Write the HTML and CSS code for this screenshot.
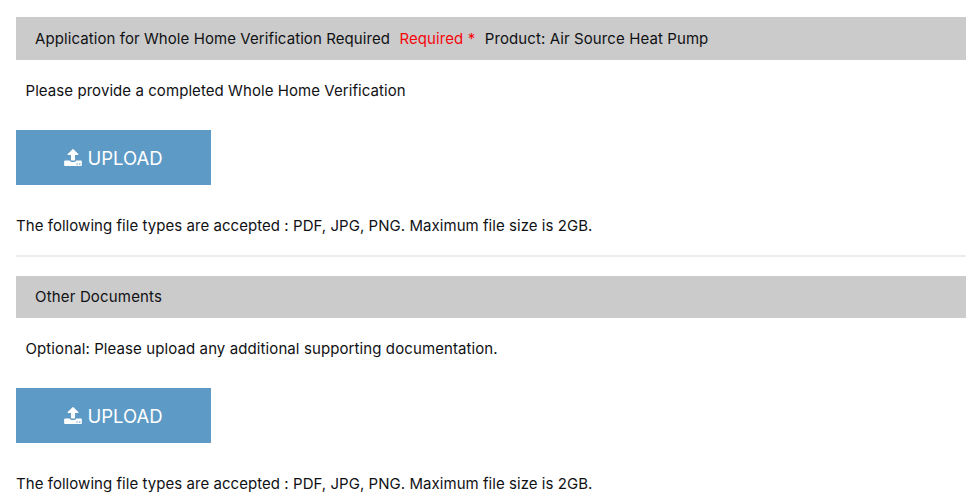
FILE: index.html
```html
<!DOCTYPE html>
<html lang="en">
<head>
  <meta charset="UTF-8" />
  <meta name="viewport" content="width=device-width, initial-scale=1.0"/>
  <title>Upload Documents</title>
  <link rel="stylesheet" href="styles.css">
</head>
<body>
  <svg class="sprite" aria-hidden="true">
    <symbol id="icon-upload" viewBox="64 64 1664 1600">
      <path d="M1344 1472q0-26-19-45t-45-19-45 19-19 45 19 45 45 19 45-19 19-45zm256 0q0-26-19-45t-45-19-45 19-19 45 19 45 45 19 45-19 19-45zm128-224v320q0 40-28 68t-68 28h-1472q-40 0-68-28t-28-68v-320q0-40 28-68t68-28h427q21 56 70.500 92t110.500 36h256q61 0 110.500-36t70.500-92h427q40 0 68 28t28 68zm-325-648q-17 40-59 40h-256v448q0 26-19 45t-45 19h-256q-26 0-45-19t-19-45v-448h-256q-42 0-59-40-17-39 14-69l448-448q18-19 45-19t45 19l448 448q31 30 14 69z"/>
    </symbol>
  </svg>

  <div class="documents">
    <div class="document">
      <div class="document-header first">
        <span>Application for Whole Home Verification Required</span>
        <span class="required">Required *</span>
        <span class="product">Product: Air Source Heat Pump</span>
      </div>
      <p class="description">Please provide a completed Whole Home Verification</p>
      <button class="upload-btn">
        <svg class="icon"><use href="#icon-upload"/></svg>
        <span>UPLOAD</span>
      </button>
      <p class="file-types">The following file types are accepted : PDF, JPG, PNG. Maximum file size is 2GB.</p>
    </div>

    <hr class="divider">

    <div class="document">
      <div class="document-header">
        <span class="title-other">Other Documents</span>
      </div>
      <p class="description optional">Optional: Please upload any additional supporting documentation.</p>
      <button class="upload-btn">
        <svg class="icon"><use href="#icon-upload"/></svg>
        <span>UPLOAD</span>
      </button>
      <p class="file-types">The following file types are accepted : PDF, JPG, PNG. Maximum file size is 2GB.</p>
    </div>
  </div>
</body>
</html>
```

FILE: styles.css
```css
body {
  font-family: Inter, "Liberation Sans", sans-serif;
  font-size: 15px;
  line-height: 20px;
  letter-spacing: 0.05px;
  color: #101114;
  background-color: #fff;
  margin: 0;
}

.sprite {
  display: none;
}

.documents {
  padding: 17px 14px 0 16px;
}

.document-header {
  box-sizing: border-box;
  display: flex;
  align-items: center;
  gap: 9.500px;
  height: 42px;
  padding: 0 0 0 19px;
  background-color: #cbcbcb;
  white-space: nowrap;
}

.first {
  height: 43px;
  letter-spacing: 0.08px;
}

.required {
  color: #f5060b;
}

.product {
  letter-spacing: 0.1px;
}

.title-other {
  letter-spacing: 0.17px;
}

.description {
  margin: 21px 0 0 9.500px;
  letter-spacing: 0.07px;
}

.upload-btn {
  display: flex;
  align-items: center;
  justify-content: center;
  gap: 5px;
  width: 195px;
  height: 55px;
  margin-top: 29px;
  padding: 1px 0 0;
  border: none;
  background-color: #5e9ac6;
  color: #fff;
  font-family: inherit;
  font-size: 18.500px;
  cursor: pointer;
}

.icon {
  width: 18px;
  height: 17px;
  margin-bottom: 1px;
  fill: currentColor;
}

.file-types {
  margin: 31px 0 0;
}

.divider {
  height: 2px;
  margin: 19px 0;
  border: none;
  background-color: #ececec;
}

.optional {
  letter-spacing: 0.1px;
}
```
